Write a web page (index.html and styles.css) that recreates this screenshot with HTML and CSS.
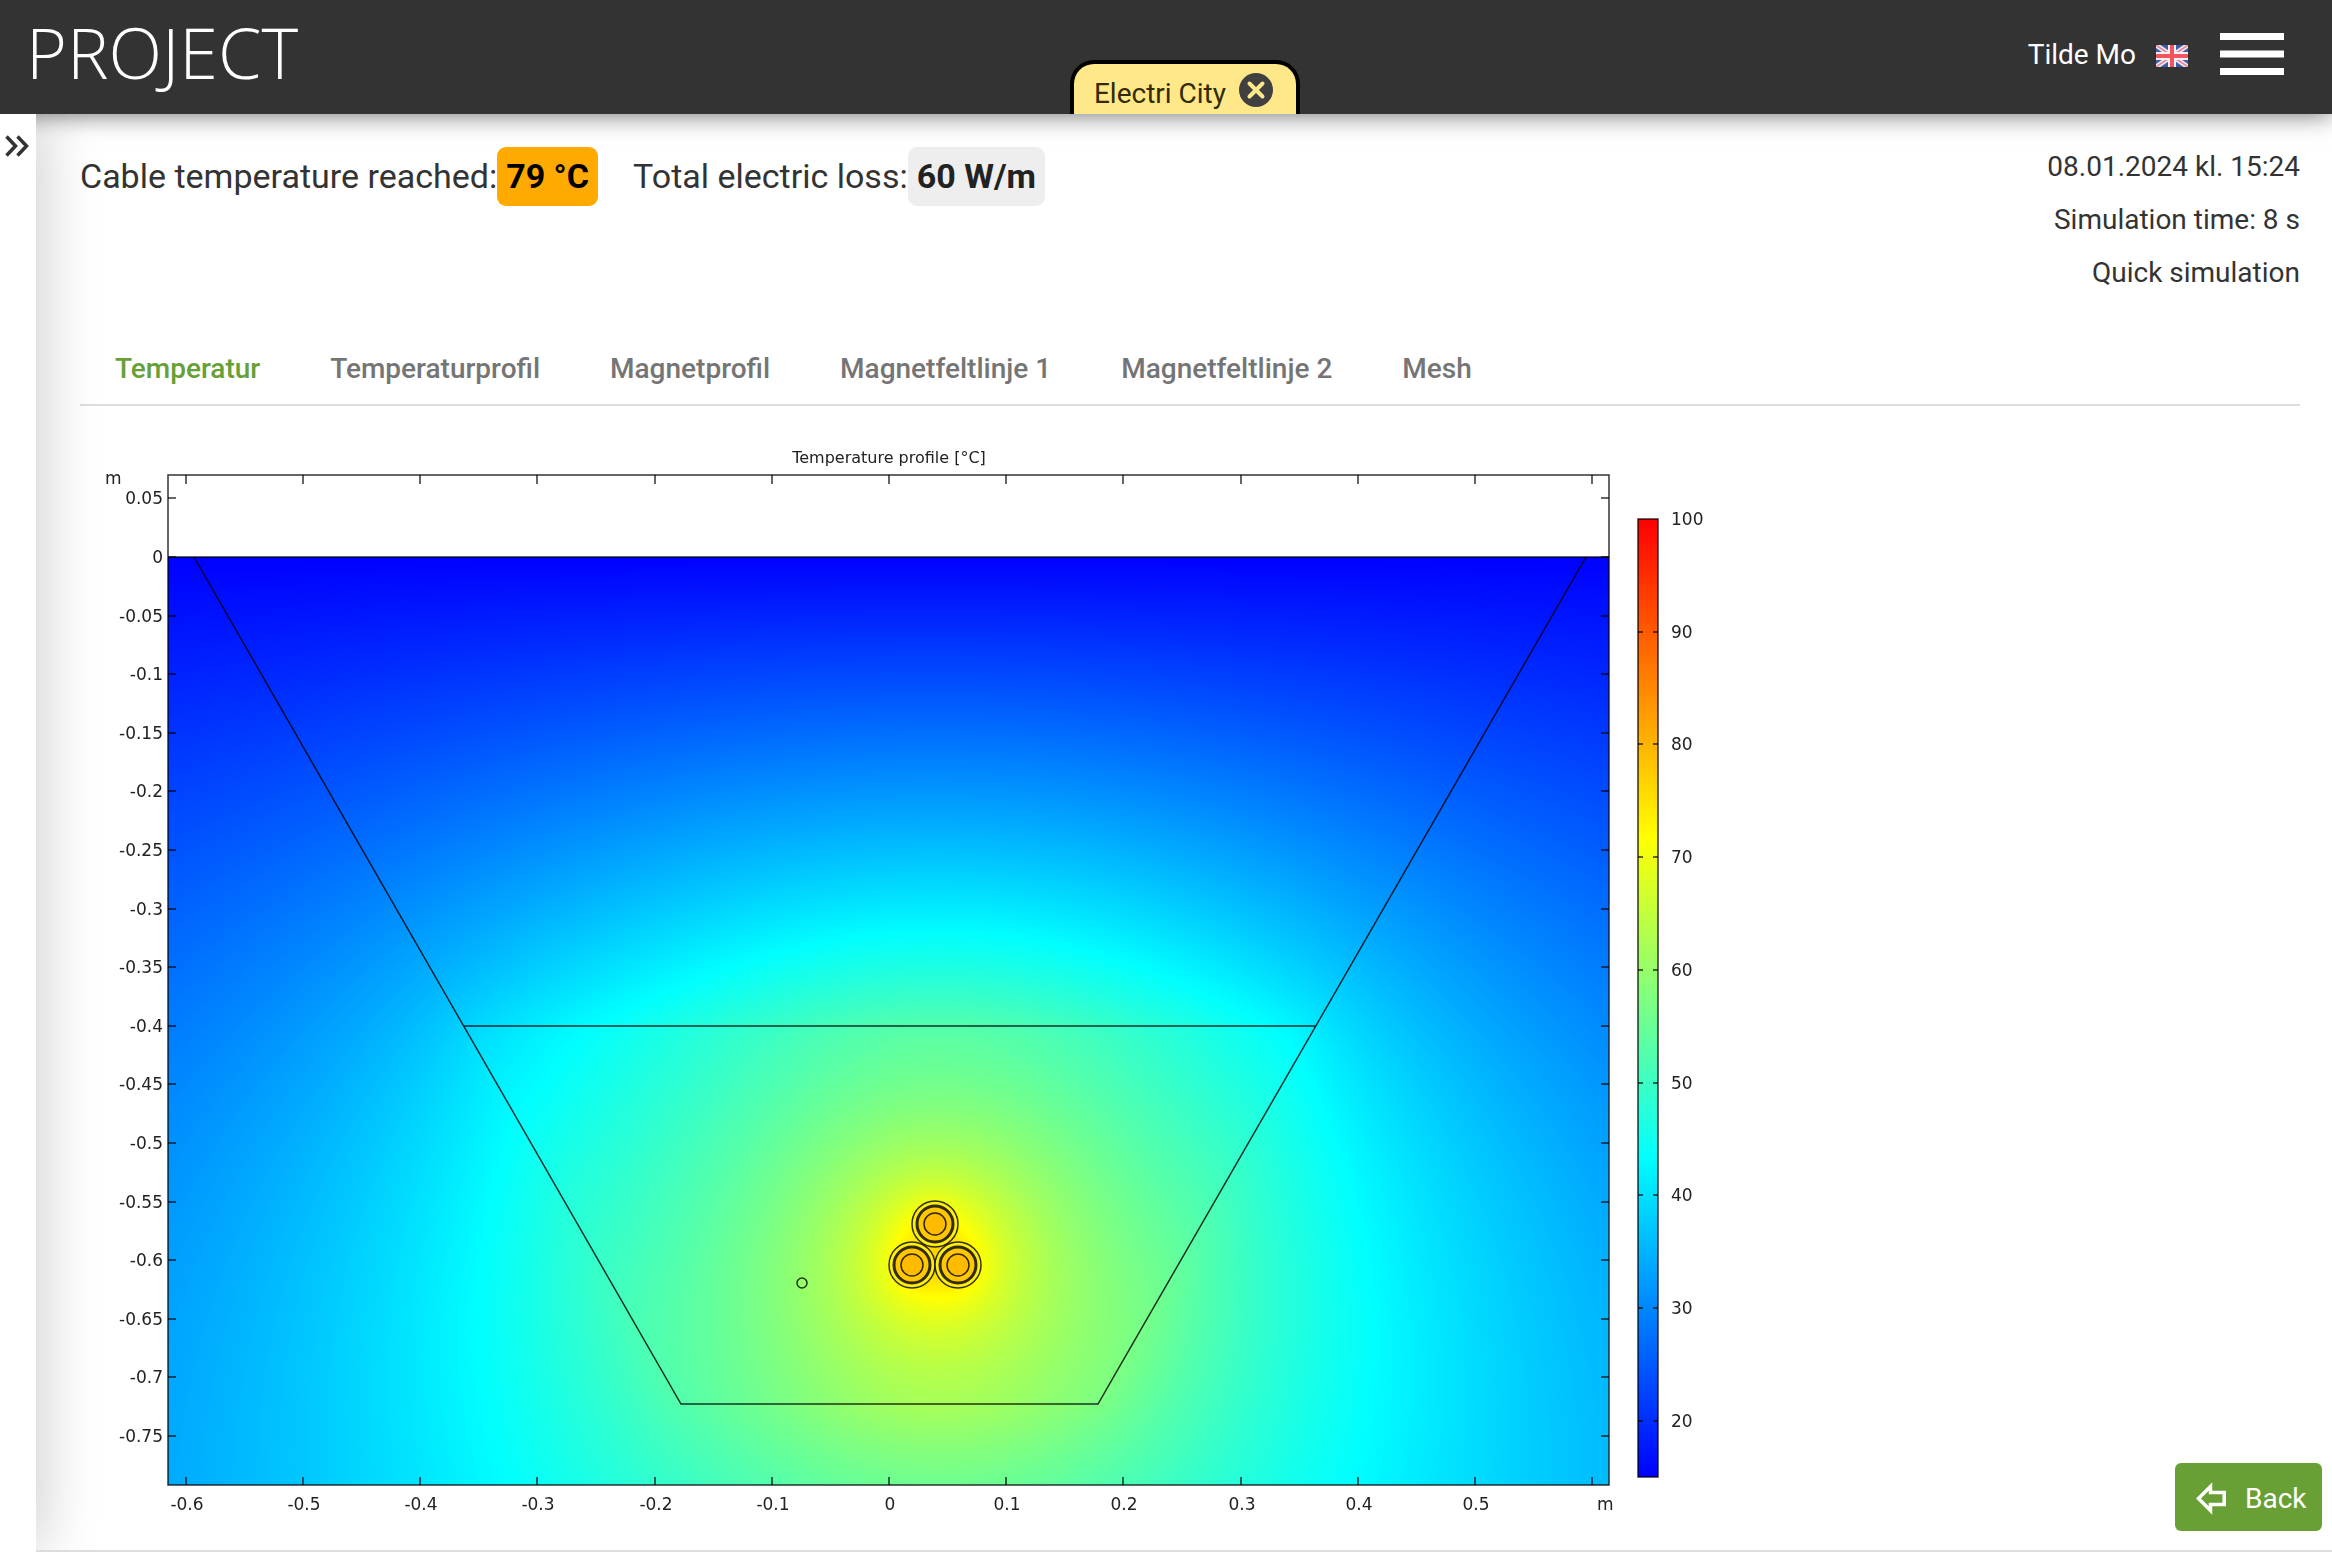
FILE: index.html
```html
<!DOCTYPE html>
<html lang="en">
<head>
<meta charset="utf-8">
<meta name="viewport" content="width=device-width, initial-scale=1">
<title>Project – Electri City</title>
<link rel="stylesheet" href="styles.css">
<script src="chart.js" defer></script>
</head>
<body>
<header class="topbar">
  <a class="logo" href="#">PROJECT</a>
  <div class="project-tab">
    <span>Electri City</span>
    <button class="icon-button" type="button" aria-label="Close project">
      <svg width="34" height="34" viewBox="0 0 34 34"><circle cx="17" cy="17" r="17" fill="#404040"/><path d="M10.500 10.500l13 13M23.500 10.500l-13 13" stroke="#ffe889" stroke-width="4" stroke-linecap="round"/></svg>
    </button>
  </div>
  <div class="account">
    <span>Tilde Mo</span>
    <svg class="flag" width="32" height="22" viewBox="0 0 32 22" role="img" aria-label="English">
      <rect width="32" height="22" fill="#3f5ba9"/>
      <path d="M0 0L32 22M32 0L0 22" stroke="#e8e8f4" stroke-width="5"/>
      <path d="M0 0L32 22M32 0L0 22" stroke="#ee8088" stroke-width="1.500"/>
      <path d="M16 0V22M0 11H32" stroke="#f4f0f6" stroke-width="8"/>
      <path d="M16 0V22M0 11H32" stroke="#f2555c" stroke-width="4"/>
    </svg>
    <button class="icon-button menu" type="button" aria-label="Menu">
      <svg width="64" height="42" viewBox="0 0 64 42"><path d="M0 3.500H64M0 21H64M0 38.500H64" stroke="#fff" stroke-width="7"/></svg>
    </button>
  </div>
</header>
<div class="workspace">
  <aside class="rail">
    <button class="icon-button" type="button" aria-label="Expand panel">
      <svg width="24" height="22" viewBox="0 0 24 22" fill="none" stroke="#333" stroke-width="3.500"><path d="M1.500 1.500L10.500 11L1.500 20.500M12.500 1.500L21.500 11L12.500 20.500"/></svg>
    </button>
  </aside>
  <main class="content">
    <section class="summary">
      <div class="readings">
        <div class="reading">Cable temperature reached:<strong class="badge badge-warm">79 °C</strong></div>
        <div class="reading">Total electric loss:<strong class="badge">60 W/m</strong></div>
      </div>
      <div class="run-info">
        <div>08.01.2024 kl. 15:24</div>
        <div>Simulation time: 8 s</div>
        <div>Quick simulation</div>
      </div>
    </section>
    <nav class="tabs">
      <a class="tab active" href="#">Temperatur</a>
      <a class="tab" href="#">Temperaturprofil</a>
      <a class="tab" href="#">Magnetprofil</a>
      <a class="tab" href="#">Magnetfeltlinje 1</a>
      <a class="tab" href="#">Magnetfeltlinje 2</a>
      <a class="tab" href="#">Mesh</a>
    </nav>
    <svg class="chart" viewBox="80 440 1660 1090" role="img" aria-label="Temperature profile">
      <defs>
        <linearGradient id="scale" x1="0" y1="0" x2="0" y2="1">
          <stop offset="0" stop-color="#f00"/>
          <stop offset="0.333" stop-color="#ff0"/>
          <stop offset="0.667" stop-color="#0ff"/>
          <stop offset="1" stop-color="#00f"/>
        </linearGradient>
        <g id="cable">
          <circle r="23" fill="#fe1"/>
          <circle r="18" stroke-width="3" fill="#ffc800"/>
          <circle r="11" fill="#fb0"/>
        </g>
      </defs>
      <foreignObject x="168" y="557" width="1441" height="928"><canvas id="field" class="field" width="1441" height="928"></canvas></foreignObject>
      <g class="lines">
        <path d="M168 557H1609"/>
        <path d="M194 557L681 1404H1098L1586 557M463 1026H1316"/>
        <use href="#cable" x="935" y="1224"/>
        <use href="#cable" x="912" y="1265"/>
        <use href="#cable" x="958" y="1265"/>
        <circle cx="802" cy="1283" r="5"/>
        <rect x="168" y="475" width="1441" height="1010"/>
        <rect x="1638" y="519" width="20" height="958" fill="url(#scale)"/>
        <path id="ticks"/>
      </g>
      <g id="labels" class="labels">
        <text class="title" x="889" y="463" text-anchor="middle">Temperature profile [°C]</text>
        <text x="105" y="484">m</text>
        <text x="1597" y="1510">m</text>
      </g>
    </svg>
    <button class="back" type="button">
      <svg width="30" height="33" viewBox="0 0 30 33" fill="none" stroke="#fff" stroke-width="3.500"><path d="M2.500 16.500L14.500 4.500V10.500H28.200V22.500H14.500V28.500Z"/></svg>
      Back
    </button>
  </main>
</div>
</body>
</html>
```
FILE: styles.css
```css
* { box-sizing: border-box; }
body {
  margin: 0;
  min-height: 100vh;
  display: flex;
  flex-direction: column;
  background: #fff;
  color: #333;
  font-family: Roboto, sans-serif;
  font-size: 28px;
}
a { color: inherit; text-decoration: none; }
svg { display: block; }
.icon-button { display: block; padding: 0; border: 0; background: none; cursor: pointer; }

.topbar {
  display: grid;
  grid-template-columns: 1fr auto 1fr;
  height: 114px;
  padding: 0 48px 0 26px;
  background: #333;
  color: #fff;
}
.logo { font: 300 70px/104px "Open Sans", sans-serif; }
.project-tab {
  display: flex;
  align-items: center;
  align-self: end;
  gap: 13px;
  height: 54px;
  margin-left: 60px;
  padding: 8px 23px 0 20px;
  border: 4px solid #000;
  border-bottom: 0;
  border-radius: 24px 24px 0 0;
  background: #ffe889;
  color: #332b00;
}
.project-tab .icon-button { margin-bottom: 6px; }
.account { display: flex; align-items: center; justify-content: flex-end; height: 108px; gap: 20px; }
.flag { margin-top: 4px; }
.menu { margin-left: 12px; }

.workspace { display: flex; flex: 1; }
.rail { flex: 0 0 36px; padding: 21px 5px; }
.content {
  position: relative;
  flex: 1;
  min-width: 0;
  overflow: hidden;
  padding: 26px 32px 20px 44px;
  border-bottom: 2px solid #ddd;
}
/* shadows thrown by the rail and the top bar */
.content::before, .content::after { content: ""; position: absolute; pointer-events: none; }
.content::before { inset: 0 100% 0 -36px; box-shadow: 0 0 60px rgba(0, 0, 0, .28); }
.content::after { inset: -114px 0 100% -36px; box-shadow: 0 0 24px rgba(0, 0, 0, .6); }

.summary { display: flex; justify-content: space-between; }
.readings { display: flex; gap: 35px; padding-top: 7px; font-size: 34px; line-height: 59px; }
.reading { display: flex; }
.badge { height: 59px; padding: 0 9px; border-radius: 9px; background: #eee; color: #222; }
.badge-warm { background: #fa0; color: #000; }
.run-info { text-align: right; line-height: 53px; }

.tabs { display: flex; margin-top: 35px; border-bottom: 2px solid #ddd; }
.tab { padding: 0 35px; color: #757575; font-weight: 500; line-height: 70px; }
.tab.active { color: #66a036; }

.chart { width: 100%; max-width: 1660px; margin-top: 34px; }
.field { display: block; width: 100%; height: 100%; }
.lines { fill: none; stroke: #000; stroke-opacity: .8; stroke-width: 1.500px; }
.labels { fill: #222; font: 17px "DejaVu Sans", sans-serif; }
.title { font-size: 16px; }

.back {
  position: fixed;
  right: 10px;
  bottom: 21px;
  display: flex;
  align-items: center;
  gap: 19px;
  width: 147px;
  height: 68px;
  padding: 2px 0 0 21px;
  border: 0;
  border-radius: 6px;
  background: #68a036;
  color: #fff;
  font: inherit;
  cursor: pointer;
}
```
FILE: chart.js
```js
// Steady heat conduction around three buried cables, solved on a regular grid.
const H = 0.01, NX = 400, NY = 250, SURFACE = 15;
const K_SOIL = 1, K_FILL = 2.35, HEAT = 2 * Math.PI * 23.7;
const CABLES = [[0.039, 0.569], [0.02, 0.604], [0.059, 0.604]];

const halfWidth = d => 0.595 - d * 0.576;
const conductivity = (x, d) =>
  d > 0.4 && d < 0.722 && Math.abs(x) < halfWidth(d) ? K_FILL : K_SOIL;

function solve() {
  const k = new Float64Array(NX * NY), q = new Float64Array(NX * NY);
  const t = new Float64Array(NX * NY).fill(SURFACE);
  let sources = 0;
  for (let j = 0; j < NY; j++) for (let i = 0; i < NX; i++) {
    const x = (i - NX / 2) * H, d = j * H;
    k[j * NX + i] = conductivity(x, d);
    if (CABLES.some(c => Math.hypot(x - c[0], d - c[1]) < 0.02)) { q[j * NX + i] = 1; sources++; }
  }
  for (let p = 0; p < q.length; p++) q[p] *= HEAT / sources;
  const link = (a, b) => 2 * k[a] * k[b] / (k[a] + k[b]);
  // surface held at a fixed temperature, no flow through the other three sides
  for (let n = 0; n < 900; n++)
    for (let j = 1; j < NY; j++) for (let i = 0; i < NX; i++) {
      const p = j * NX + i;
      let g = link(p, p - NX), v = g * t[p - NX] + q[p], sum = g;
      if (i > 0) { g = link(p, p - 1); v += g * t[p - 1]; sum += g; }
      if (i < NX - 1) { g = link(p, p + 1); v += g * t[p + 1]; sum += g; }
      if (j < NY - 1) { g = link(p, p + NX); v += g * t[p + NX]; sum += g; }
      t[p] += 1.97 * (v / sum - t[p]);
    }
  return t;
}

function color(t) {
  const f = Math.max(0, Math.min(3, (t - 15) / 85 * 3));
  if (f < 1) return [0, 255 * f, 255];
  if (f < 2) return [255 * (f - 1), 255, 255 * (2 - f)];
  return [255, 255 * (3 - f), 0];
}

function paint() {
  const canvas = document.getElementById('field'), ctx = canvas.getContext('2d');
  const img = ctx.createImageData(canvas.width, canvas.height), t = solve();
  for (let y = 0, o = 0; y < canvas.height; y++) for (let x = 0; x < canvas.width; x++, o += 4) {
    const gx = (x - 721) / 1172 / H + NX / 2, gy = y / 1172 / H;
    const i = Math.floor(gx), j = Math.floor(gy), a = gx - i, b = gy - j, p = j * NX + i;
    const v = (t[p] * (1 - a) + t[p + 1] * a) * (1 - b) + (t[p + NX] * (1 - a) + t[p + NX + 1] * a) * b;
    const c = color(v);
    img.data[o] = c[0]; img.data[o + 1] = c[1]; img.data[o + 2] = c[2]; img.data[o + 3] = 255;
  }
  ctx.putImageData(img, 0, 0);
}

function axes() {
  const labels = document.getElementById('labels');
  let d = '';
  const label = (x, y, text, anchor) => {
    const el = document.createElementNS('http://www.w3.org/2000/svg', 'text');
    el.setAttribute('x', x);
    el.setAttribute('y', y);
    el.setAttribute('text-anchor', anchor);
    el.textContent = text;
    labels.append(el);
  };
  for (let n = -6; n <= 6; n++) {
    const x = Math.round(889 + n * 117.2);
    d += `M${x} 475v9M${x} 1485v-8`;
    if (n < 6) label(x + 1, 1510, n / 10, 'middle');
  }
  for (let n = 1; n >= -15; n--) {
    const y = Math.round(557 - n * 58.6);
    d += `M168 ${y}h8M1609 ${y}h-8`;
    label(163, y + 6, n * 5 / 100, 'end');
  }
  for (let v = 100; v >= 20; v -= 10) {
    const y = Math.round(519 + (100 - v) * 11.27);
    if (v < 100) d += `M1638 ${y}h5M1658 ${y}h-5`;
    label(1671, y + 6, v, 'start');
  }
  document.getElementById('ticks').setAttribute('d', d);
}

axes();
paint();
```
